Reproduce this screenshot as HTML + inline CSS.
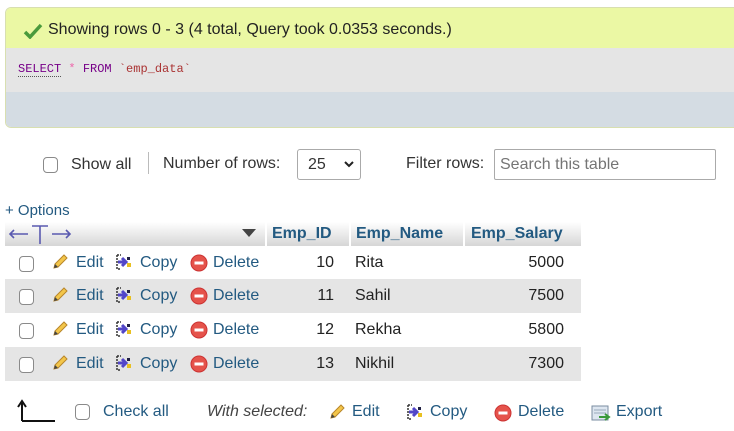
<!DOCTYPE html>
<html><head><meta charset="utf-8"><style>
*{margin:0;padding:0;box-sizing:border-box}
body{width:734px;height:431px;background:#fff;font-family:"Liberation Sans",Arial,sans-serif;font-size:16px;color:#333;position:relative;overflow:hidden}
.a{position:absolute;white-space:nowrap}
.l{color:#235a81}
.cb{position:absolute;width:15px;height:16px;border:1px solid #8a8a8a;border-radius:4px;background:#fff}
.row{position:absolute;left:5px;width:576px;height:34px}
.mono{font-family:"Liberation Mono",monospace;font-size:12px}
</style></head><body>
<div class="a" style="left:5px;top:7px;width:740px;height:121px;border-radius:6px;overflow:hidden;border:1px solid #d8dfb0">
 <div style="height:40px;background:#ebf8a4"></div>
 <div style="height:44px;background:#e5e5e5"></div>
 <div style="height:37px;background:#d4dce3"></div>
</div>
<svg class="a" style="left:23px;top:23px" width="20" height="16" viewBox="0 0 20 16"><path d="M2 9 L7 14 L18 2" stroke="#4a9a3c" stroke-width="3.5" fill="none"/></svg>
<div class="a" style="left:48px;top:21px;color:#222">Showing rows 0 - 3 (4 total, Query took 0.0353 seconds.)</div>
<div class="a mono" style="left:18px;top:62px"><span style="color:#708;border-bottom:1px dotted #555">SELECT</span> <span style="color:#e6a">*</span> <span style="color:#708">FROM</span> <span style="color:#a33">`emp_data`</span></div>

<div class="cb" style="left:43px;top:157px"></div>
<div class="a" style="left:71px;top:156px">Show all</div>
<div class="a" style="left:148px;top:152px;width:1px;height:22px;background:#bbb"></div>
<div class="a" style="left:163px;top:155px">Number of rows:</div>
<div class="a" style="left:297px;top:149px;width:64px;height:31px;border:1px solid #aaa;border-radius:3px;padding:6px 0 0 10px">25<svg style="position:absolute;left:46px;top:11px" width="10" height="7"><path d="M1 1L5 5L9 1" stroke="#222" stroke-width="2" fill="none"/></svg></div>
<div class="a" style="left:406px;top:155px">Filter rows:</div>
<div class="a" style="left:494px;top:149px;width:222px;height:31px;border:1px solid #aaa;border-radius:2px;padding:6px 0 0 5px;color:#757575">Search this table</div>

<div class="a l" style="left:5px;top:202px;font-size:15px">+ Options</div>
<div class="a" style="left:5px;top:222px;width:576px;height:24px;background:linear-gradient(#fff,#d6d6d6)"></div>
<div class="a" style="left:265px;top:222px;width:2px;height:24px;background:#fff"></div>
<div class="a" style="left:349px;top:222px;width:2px;height:24px;background:#fff"></div>
<div class="a" style="left:463px;top:222px;width:2px;height:24px;background:#fff"></div>
<svg class="a" style="left:8px;top:223px" width="64" height="22"><g stroke="#5a5ab0" stroke-width="1.6" fill="none"><path d="M2 11H20M6 7L2 11L6 15"/><path d="M44 11H62M58 7L62 11L58 15"/><path d="M24 3H40M32 3V21"/></g></svg>
<svg class="a" style="left:242px;top:229px" width="14" height="9"><path d="M0 0H14L7 8Z" fill="#444"/></svg>
<div class="a l" style="left:272px;top:225px;font-weight:bold">Emp_ID</div>
<div class="a l" style="left:356px;top:225px;font-weight:bold">Emp_Name</div>
<div class="a l" style="left:471px;top:225px;font-weight:bold">Emp_Salary</div>

<div class="row" style="top:246px"></div>
<div class="row" style="top:279px;background:#e5e5e5"></div>
<div class="row" style="top:313px"></div>
<div class="row" style="top:347px;background:#e5e5e5"></div>

<div id="rows"></div>
<script>
var d=[[10,"Rita",5000,254],[11,"Sahil",7500,287],[12,"Rekha",5800,321],[13,"Nikhil",7300,355]];
var h="";
var pencil='<svg width="18" height="18" viewBox="0 0 18 18"><path d="M3 15 L4 11 L13 2 L16 5 L7 14 Z" fill="#f3c64a" stroke="#b8862a"/><path d="M3 15L4 11L7 14Z" fill="#444"/></svg>';
var copy='<svg width="20" height="18" viewBox="0 0 20 18"><path d="M3 2H7M3 2V16H7" stroke="#333" fill="none" stroke-width="1.5" stroke-dasharray="2 1"/><path d="M4 9H11M8 5L12 9L8 13" stroke="#5246c8" stroke-width="3" fill="none"/><rect x="13" y="4" width="3" height="3" fill="#224"/><rect x="13" y="10" width="4" height="4" fill="#e8c020"/></svg>';
var del='<svg width="18" height="18" viewBox="0 0 18 18"><circle cx="9" cy="9" r="8" fill="#e5534b" stroke="#c33"/><rect x="4.5" y="7.5" width="9" height="3" fill="#fff"/></svg>';
d.forEach(function(r){var y=r[3];
h+='<div class="cb" style="left:19px;top:'+(y+2)+'px"></div>';
h+='<div class="a" style="left:51px;top:'+(y-1)+'px">'+pencil+'</div><div class="a l" style="left:76px;top:'+y+'px">Edit</div>';
h+='<div class="a" style="left:114px;top:'+(y-1)+'px">'+copy+'</div><div class="a l" style="left:140px;top:'+y+'px">Copy</div>';
h+='<div class="a" style="left:190px;top:'+(y)+'px">'+del+'</div><div class="a l" style="left:213px;top:'+y+'px">Delete</div>';
h+='<div class="a" style="left:266px;top:'+y+'px;width:68px;text-align:right;color:#222">'+r[0]+'</div>';
h+='<div class="a" style="left:355px;top:'+y+'px;color:#222">'+r[1]+'</div>';
h+='<div class="a" style="left:470px;top:'+y+'px;width:94px;text-align:right;color:#222">'+r[2]+'</div>';
});
h+='<svg class="a" style="left:17px;top:399px" width="40" height="24"><path d="M5 22H38M5 22V4M1 8L5 2L9 8" stroke="#111" stroke-width="2" fill="none"/></svg>';
h+='<div class="cb" style="left:75px;top:404px"></div><div class="a l" style="left:103px;top:403px">Check all</div>';
h+='<div class="a" style="left:207px;top:403px;font-style:italic;color:#444">With selected:</div>';
h+='<div class="a" style="left:328px;top:403px">'+pencil+'</div><div class="a l" style="left:352px;top:403px">Edit</div>';
h+='<div class="a" style="left:405px;top:403px">'+copy+'</div><div class="a l" style="left:430px;top:403px">Copy</div>';
h+='<div class="a" style="left:494px;top:404px">'+del+'</div><div class="a l" style="left:518px;top:403px">Delete</div>';
h+='<svg class="a" style="left:591px;top:404px" width="20" height="18"><rect x="1" y="2" width="16" height="14" fill="#dde6f0" stroke="#7a8ca0"/><path d="M3 6H15M3 9H15" stroke="#9ab"/><path d="M8 13H17M14 10L18 13L14 16" stroke="#3a9a3a" stroke-width="2" fill="none"/></svg><div class="a l" style="left:616px;top:403px">Export</div>';
document.getElementById("rows").innerHTML=h;
</script>
</body></html>
